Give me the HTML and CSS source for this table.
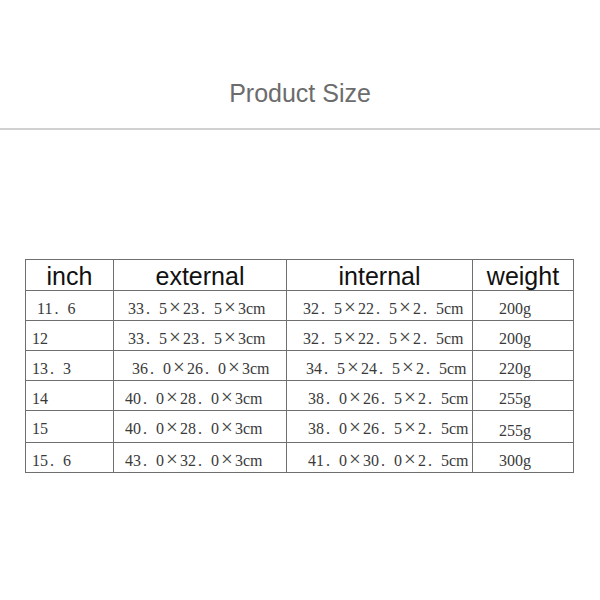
FILE: index.html
```html
<!DOCTYPE html>
<html>
<head>
<meta charset="utf-8">
<link rel="stylesheet" href="styles.css">
</head>
<body>
<div class="title">Product Size</div>
<div class="rule"></div>
<table class="size">
  <colgroup>
    <col class="c1"><col class="c2"><col class="c3"><col class="c4">
  </colgroup>
  <thead>
    <tr><th>inch</th><th>external</th><th>internal</th><th>weight</th></tr>
  </thead>
  <tbody>
    <tr>
      <td class="inch p11">11<span class="d">.</span>6</td>
      <td class="ext">33<span class="d">.</span>5<span class="x">×</span>23<span class="d">.</span>5<span class="x">×</span>3cm</td>
      <td class="int">32<span class="d">.</span>5<span class="x">×</span>22<span class="d">.</span>5<span class="x">×</span>2<span class="d">.</span>5cm</td>
      <td class="wt">200g</td>
    </tr>
    <tr>
      <td class="inch">12</td>
      <td class="ext">33<span class="d">.</span>5<span class="x">×</span>23<span class="d">.</span>5<span class="x">×</span>3cm</td>
      <td class="int">32<span class="d">.</span>5<span class="x">×</span>22<span class="d">.</span>5<span class="x">×</span>2<span class="d">.</span>5cm</td>
      <td class="wt">200g</td>
    </tr>
    <tr>
      <td class="inch">13<span class="d">.</span>3</td>
      <td class="ext shift">36<span class="d">.</span>0<span class="x">×</span>26<span class="d">.</span>0<span class="x">×</span>3cm</td>
      <td class="int shift">34<span class="d">.</span>5<span class="x">×</span>24<span class="d">.</span>5<span class="x">×</span>2<span class="d">.</span>5cm</td>
      <td class="wt">220g</td>
    </tr>
    <tr>
      <td class="inch">14</td>
      <td class="ext left">40<span class="d">.</span>0<span class="x">×</span>28<span class="d">.</span>0<span class="x">×</span>3cm</td>
      <td class="int right">38<span class="d">.</span>0<span class="x">×</span>26<span class="d">.</span>5<span class="x">×</span>2<span class="d">.</span>5cm</td>
      <td class="wt">255g</td>
    </tr>
    <tr>
      <td class="inch">15</td>
      <td class="ext left">40<span class="d">.</span>0<span class="x">×</span>28<span class="d">.</span>0<span class="x">×</span>3cm</td>
      <td class="int right">38<span class="d">.</span>0<span class="x">×</span>26<span class="d">.</span>5<span class="x">×</span>2<span class="d">.</span>5cm</td>
      <td class="wt low">255g</td>
    </tr>
    <tr>
      <td class="inch">15<span class="d">.</span>6</td>
      <td class="ext left">43<span class="d">.</span>0<span class="x">×</span>32<span class="d">.</span>0<span class="x">×</span>3cm</td>
      <td class="int right">41<span class="d">.</span>0<span class="x">×</span>30<span class="d">.</span>0<span class="x">×</span>2<span class="d">.</span>5cm</td>
      <td class="wt">300g</td>
    </tr>
  </tbody>
</table>
</body>
</html>
```
FILE: styles.css
```css
html, body {
  margin: 0;
  padding: 0;
  background: #ffffff;
}

.title {
  padding-top: 78px;
  font-family: "Liberation Sans", Arial, sans-serif;
  font-size: 25px;
  line-height: 30px;
  color: #6c6c6c;
  text-align: center;
}

.rule {
  margin-top: 20px;
  height: 2px;
  background: #d0d0d0;
}

.size {
  margin: 129px 0 0 25px;
  border-collapse: collapse;
  table-layout: fixed;
  width: 548px;
  border: 1px solid #6f6f6f;
}

.c1 { width: 88px; }
.c2 { width: 173px; }
.c3 { width: 186px; }
.c4 { width: 101px; }

.size th,
.size td {
  border: 1px solid #6f6f6f;
  white-space: nowrap;
}

.size th {
  font-family: "Liberation Sans", Arial, sans-serif;
  font-weight: normal;
  font-size: 25px;
  line-height: 28px;
  padding: 2px 0 0 0;
  height: 30px;
  box-sizing: border-box;
  color: #111111;
  text-align: center;
  vertical-align: top;
}

.size td {
  font-family: "Liberation Serif", "Times New Roman", serif;
  font-size: 16px;
  line-height: 22px;
  padding-top: 7px;
  padding-bottom: 0;
  padding-right: 0;
  color: #3a3a3a;
  text-align: left;
  vertical-align: top;
}

.d {
  display: inline-block;
  box-sizing: border-box;
  width: 15px;
  padding-left: 2px;
}

.x {
  display: inline-block;
  width: 16px;
  font-size: 21px;
  line-height: 0;
  text-align: center;
  color: #444444;
}

.size td.inch { padding-left: 6px; }
.size td.inch.p11 { padding-left: 11px; }

.size td.ext { padding-left: 14px; }
.size td.ext.shift { padding-left: 18px; }
.size td.ext.left { padding-left: 11px; }

.size td.int { padding-left: 16px; }
.size td.int.shift { padding-left: 19px; }
.size td.int.right { padding-left: 21px; }

.size td.wt { padding-left: 26px; }
.size td.wt.low { padding-top: 9px; }
```
